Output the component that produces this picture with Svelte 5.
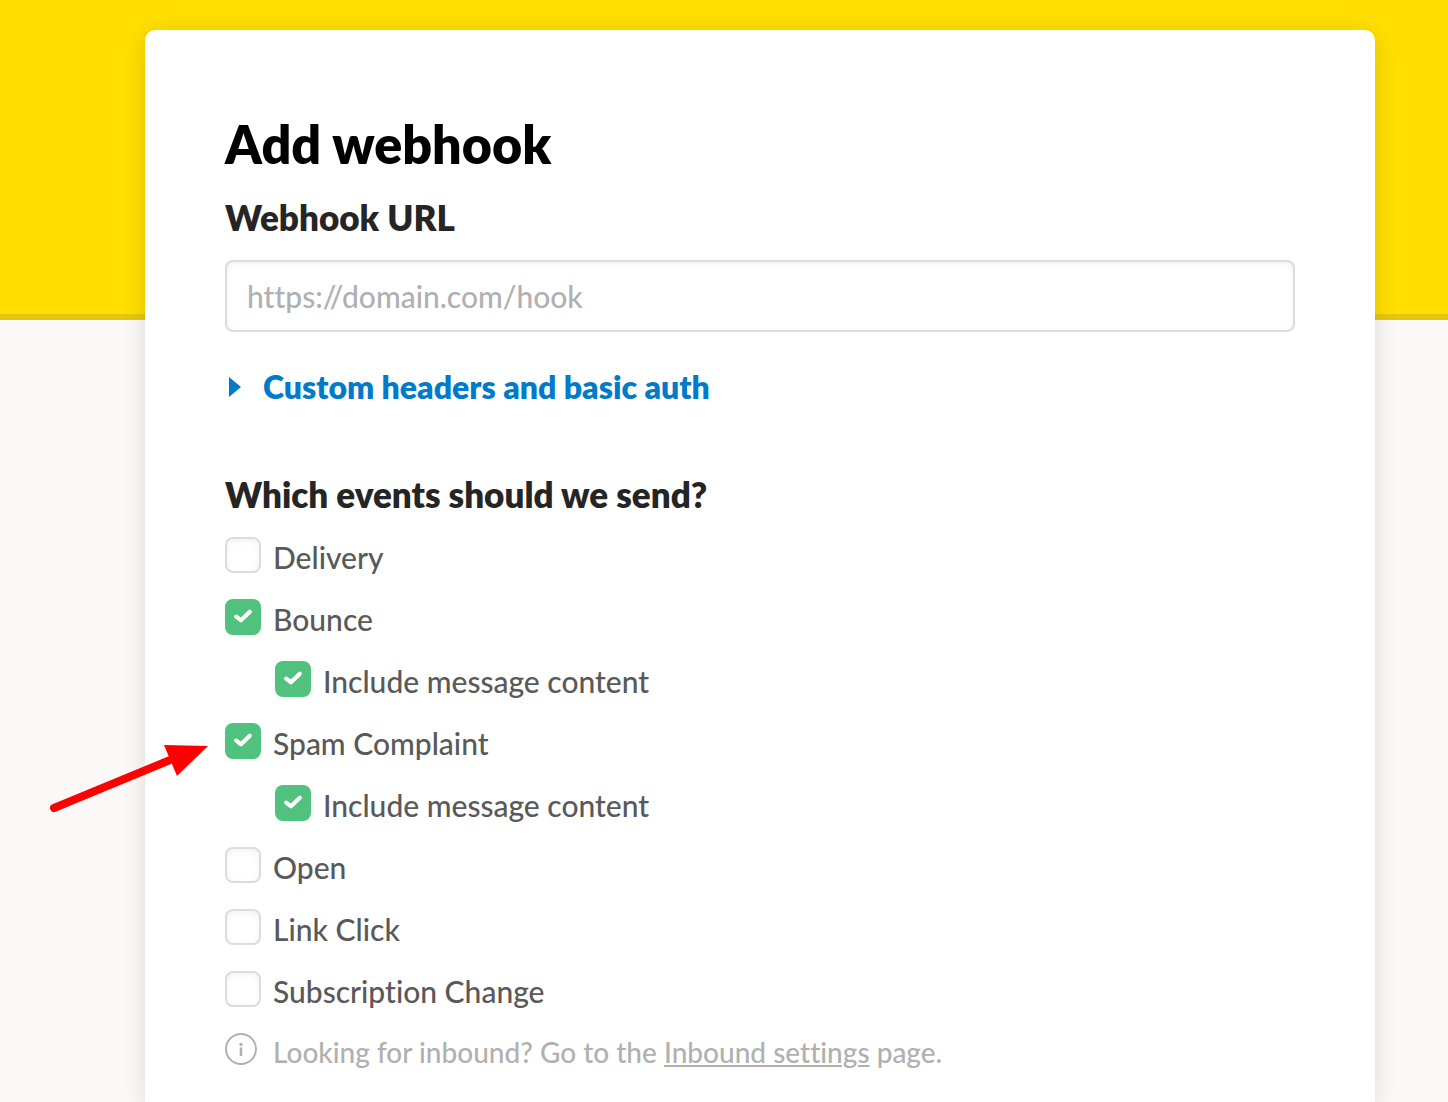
<script lang="ts">
  let url = $state("");
  let events = $state([
    { id: "delivery", label: "Delivery", checked: false, nested: false },
    { id: "bounce", label: "Bounce", checked: true, nested: false },
    { id: "bounce-content", label: "Include message content", checked: true, nested: true },
    { id: "spam", label: "Spam Complaint", checked: true, nested: false },
    { id: "spam-content", label: "Include message content", checked: true, nested: true },
    { id: "open", label: "Open", checked: false, nested: false },
    { id: "click", label: "Link Click", checked: false, nested: false },
    { id: "subscription", label: "Subscription Change", checked: false, nested: false },
  ]);
</script>

<svelte:head>
  <title>Add webhook</title>
</svelte:head>

<div class="page">
  <main>
    <h1>Add webhook</h1>
    <form>
      <label class="heading" for="url">Webhook URL</label>
      <input class="url" id="url" type="text" placeholder="https://domain.com/hook" bind:value={url} />

      <button class="disclosure" type="button">
        <svg width="12" height="20" viewBox="0 0 12 20"><path d="M0 0 12 10 0 20Z" fill="currentColor" /></svg>
        Custom headers and basic auth
      </button>

      <fieldset>
        <legend class="heading">Which events should we send?</legend>
        {#each events as event (event.id)}
          <div class="event" class:nested={event.nested}>
            <span class="box">
              <input type="checkbox" id={event.id} bind:checked={event.checked} />
              {#if event.checked}
                <svg class="tick" viewBox="0 0 36 36">
                  <path d="M11.2 17.6 16 21.2 24.8 12.8" fill="none" stroke="#fff" stroke-width="4.2" stroke-linecap="round" stroke-linejoin="round" />
                </svg>
              {/if}
            </span>
            <label for={event.id}>{event.label}</label>
            {#if event.id === "spam"}
              <svg class="arrow" viewBox="0 0 160 70">
                <path d="M5 65 126 15" stroke="#f00" stroke-width="8" stroke-linecap="round" />
                <path d="M115 2 159 3 128 33Z" fill="#f00" />
              </svg>
            {/if}
          </div>
        {/each}
      </fieldset>

      <p class="hint">
        <svg width="32" height="32" viewBox="0 0 32 32">
          <circle cx="16" cy="16" r="15" fill="none" stroke="#b0b0b0" stroke-width="2" />
          <circle cx="16" cy="11.4" r="1.7" fill="#b0b0b0" />
          <path d="M16 14.5V23" stroke="#b0b0b0" stroke-width="2.6" />
        </svg>
        <span>Looking for inbound? Go to the <a href="#inbound">Inbound settings</a> page.</span>
      </p>
    </form>
  </main>
</div>

<style>
  :global(body) {
    margin: 0;
    font-family: Lato, "Open Sans", sans-serif;
    font-variant-ligatures: none;
    color: #595959;
  }
  .page {
    display: flow-root;
    min-height: 100vh;
    background: linear-gradient(#ffde00 314px, #e6c60f 314px, #e6c60f 320px, #faf9f8 320px);
  }
  main {
    box-sizing: border-box;
    min-height: calc(100vh - 30px);
    margin: 30px 73px 0 145px;
    padding: 80px 80px 30px;
    background: #fff;
    border-radius: 10px 10px 0 0;
    box-shadow: 0 4px 24px rgba(0, 0, 0, 0.12);
  }
  h1 {
    margin: 0;
    font-size: 52px;
    line-height: 68px;
    font-weight: 800;
    color: #000;
  }
  .heading {
    display: block;
    padding: 0;
    font-size: 35px;
    line-height: 38px;
    font-weight: 800;
    color: #252525;
  }
  form > .heading {
    margin: 20px 0 24px;
  }
  .url {
    display: block;
    box-sizing: border-box;
    width: 100%;
    height: 72px;
    padding: 0 20px;
    border: 2px solid #dcdcdc;
    border-radius: 8px;
    box-shadow: inset 0 2px 6px rgba(0, 0, 0, 0.06);
    font: inherit;
    font-family: "Lato Medium", Lato, sans-serif;
    font-size: 30px;
    font-weight: 500;
    color: #252525;
  }
  .url::placeholder {
    color: #b0b0b0;
    opacity: 1;
  }
  .disclosure {
    display: flex;
    align-items: center;
    gap: 22px;
    margin: 35px 0 0;
    padding: 0 0 0 4px;
    border: 0;
    background: none;
    font: inherit;
    font-size: 32px;
    line-height: 40px;
    font-weight: 800;
    color: #007bc9;
  }
  fieldset {
    margin: 68px 0 0;
    padding: 0;
    border: 0;
    min-width: 0;
  }
  legend {
    margin-bottom: 24px;
  }
  .event {
    position: relative;
    display: flex;
    align-items: flex-start;
    gap: 12px;
    margin-bottom: 22px;
    font-family: "Lato Medium", Lato, sans-serif;
    font-size: 30px;
    line-height: 40px;
    font-weight: 500;
  }
  .nested {
    margin-left: 50px;
  }
  .box {
    position: relative;
    width: 36px;
    height: 36px;
  }
  .box input {
    display: block;
    box-sizing: border-box;
    appearance: none;
    width: 36px;
    height: 36px;
    margin: 0;
    border: 2px solid #dcdcdc;
    border-radius: 8px;
    background: #fff;
    box-shadow: inset 0 2px 6px rgba(0, 0, 0, 0.06);
  }
  .box input:checked {
    border: 0;
    background: #50c27d;
    box-shadow: none;
  }
  .tick {
    position: absolute;
    inset: 0;
    pointer-events: none;
  }
  .arrow {
    position: absolute;
    left: -176px;
    top: 20px;
    width: 160px;
    height: 70px;
    pointer-events: none;
  }
  .hint {
    display: flex;
    align-items: flex-start;
    gap: 16px;
    margin: 0;
    font-family: "Lato Medium", Lato, sans-serif;
    font-size: 28px;
    line-height: 38px;
    font-weight: 500;
    color: #b0b0b0;
  }
  .hint a {
    color: inherit;
    text-decoration-thickness: 2px;
    text-underline-offset: 2px;
  }
</style>
